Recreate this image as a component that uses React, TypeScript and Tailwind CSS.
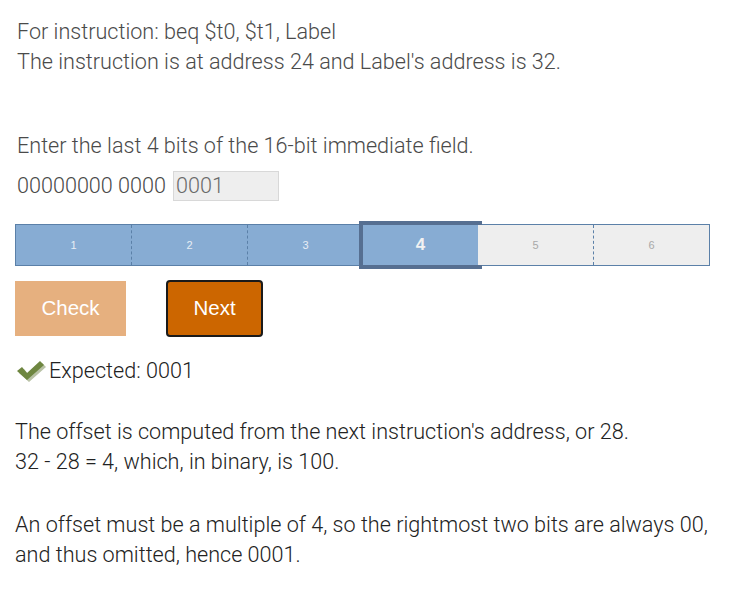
import React from 'react';

const steps = [1, 2, 3, 4, 5, 6];
const current = 4;

function CheckMark() {
    return (
        <svg width="32" height="24" viewBox="0 0 32 24" className="shrink-0">
            <path d="M3 13 L8 9 L13 15 L26 3 L30 7 L13 22 Z" fill="#b9c2a6" transform="translate(1 1)" />
            <path d="M2 12 L7 8 L12 14 L25 2 L29 6 L12 21 Z" fill="#6e8640" />
        </svg>
    );
}

export default function App() {
    return (
        <div className="min-h-[590px] w-[731px] bg-white pl-[15px] pr-[21px] pt-[17px] font-['Roboto',sans-serif] font-light">
            <div className="ml-[2px] text-[21.6px] leading-[30px] text-[#4a4a4a]">
                <div>For instruction: beq $t0, $t1, Label</div>
                <div>The instruction is at address 24 and Label's address is 32.</div>
                <div className="mt-[54px]">Enter the last 4 bits of the 16-bit immediate field.</div>
                <div className="mt-[10px] flex h-[30px] items-center">
                    <span>00000000 0000</span>
                    <div className="ml-[7px] flex h-[30px] w-[106px] items-center border border-[#d8d8d8] bg-[#eeeeee] px-[2px] text-[#6a6a6a]">
                        0001
                    </div>
                </div>
            </div>

            <div className="mt-[23px] flex h-[42px] border border-[#5b80a8] font-['Liberation_Sans',sans-serif] font-normal">
                {steps.map((s, i) => {
                    const done = s <= current;
                    const active = s === current;
                    const dashed = i > 0 && s !== current && s !== current + 1;
                    return (
                        <div
                            key={s}
                            className={`relative flex flex-1 items-center justify-center ${done ? 'bg-[#87acd3]' : 'bg-[#eeeeee]'} ${dashed ? 'border-l border-dashed border-[#5b80a8]' : ''}`}
                        >
                            {active && (
                                <div className="absolute -top-[4px] -bottom-[4px] -left-[4px] -right-[4px] border-[4px] border-[#566f91]" />
                            )}
                            <span
                                className={
                                    active
                                        ? 'text-[17px] font-bold text-[#f2f2f2]'
                                        : done
                                          ? 'text-[11px] text-[#e8eef5]'
                                          : 'text-[11px] text-[#a9a9a9]'
                                }
                            >
                                {s}
                            </span>
                        </div>
                    );
                })}
            </div>

            <div className="mt-[14px] flex items-center gap-[40px] font-['Liberation_Sans',sans-serif] font-normal">
                <div className="flex h-[55px] w-[111px] items-center justify-center bg-[#e6b07f] text-[20.5px] text-white">
                    Check
                </div>
                <div className="flex h-[57px] w-[97px] items-center justify-center rounded-[4px] border-[2px] border-[#1a1a1a] bg-[#cc6600] text-[20.5px] text-white">
                    Next
                </div>
            </div>

            <div className="mt-[19px] flex items-center gap-[2px] text-[21.6px] leading-[30px] text-[#222]">
                <CheckMark />
                <span>Expected: 0001</span>
            </div>

            <div className="mt-[31px] text-[21.6px] leading-[30px] text-[#222]">
                <div>The offset is computed from the next instruction's address, or 28.</div>
                <div>32 - 28 = 4, which, in binary, is 100.</div>
                <div className="mt-[33px]">An offset must be a multiple of 4, so the rightmost two bits are always 00, and thus omitted, hence 0001.</div>
            </div>
        </div>
    );
}
